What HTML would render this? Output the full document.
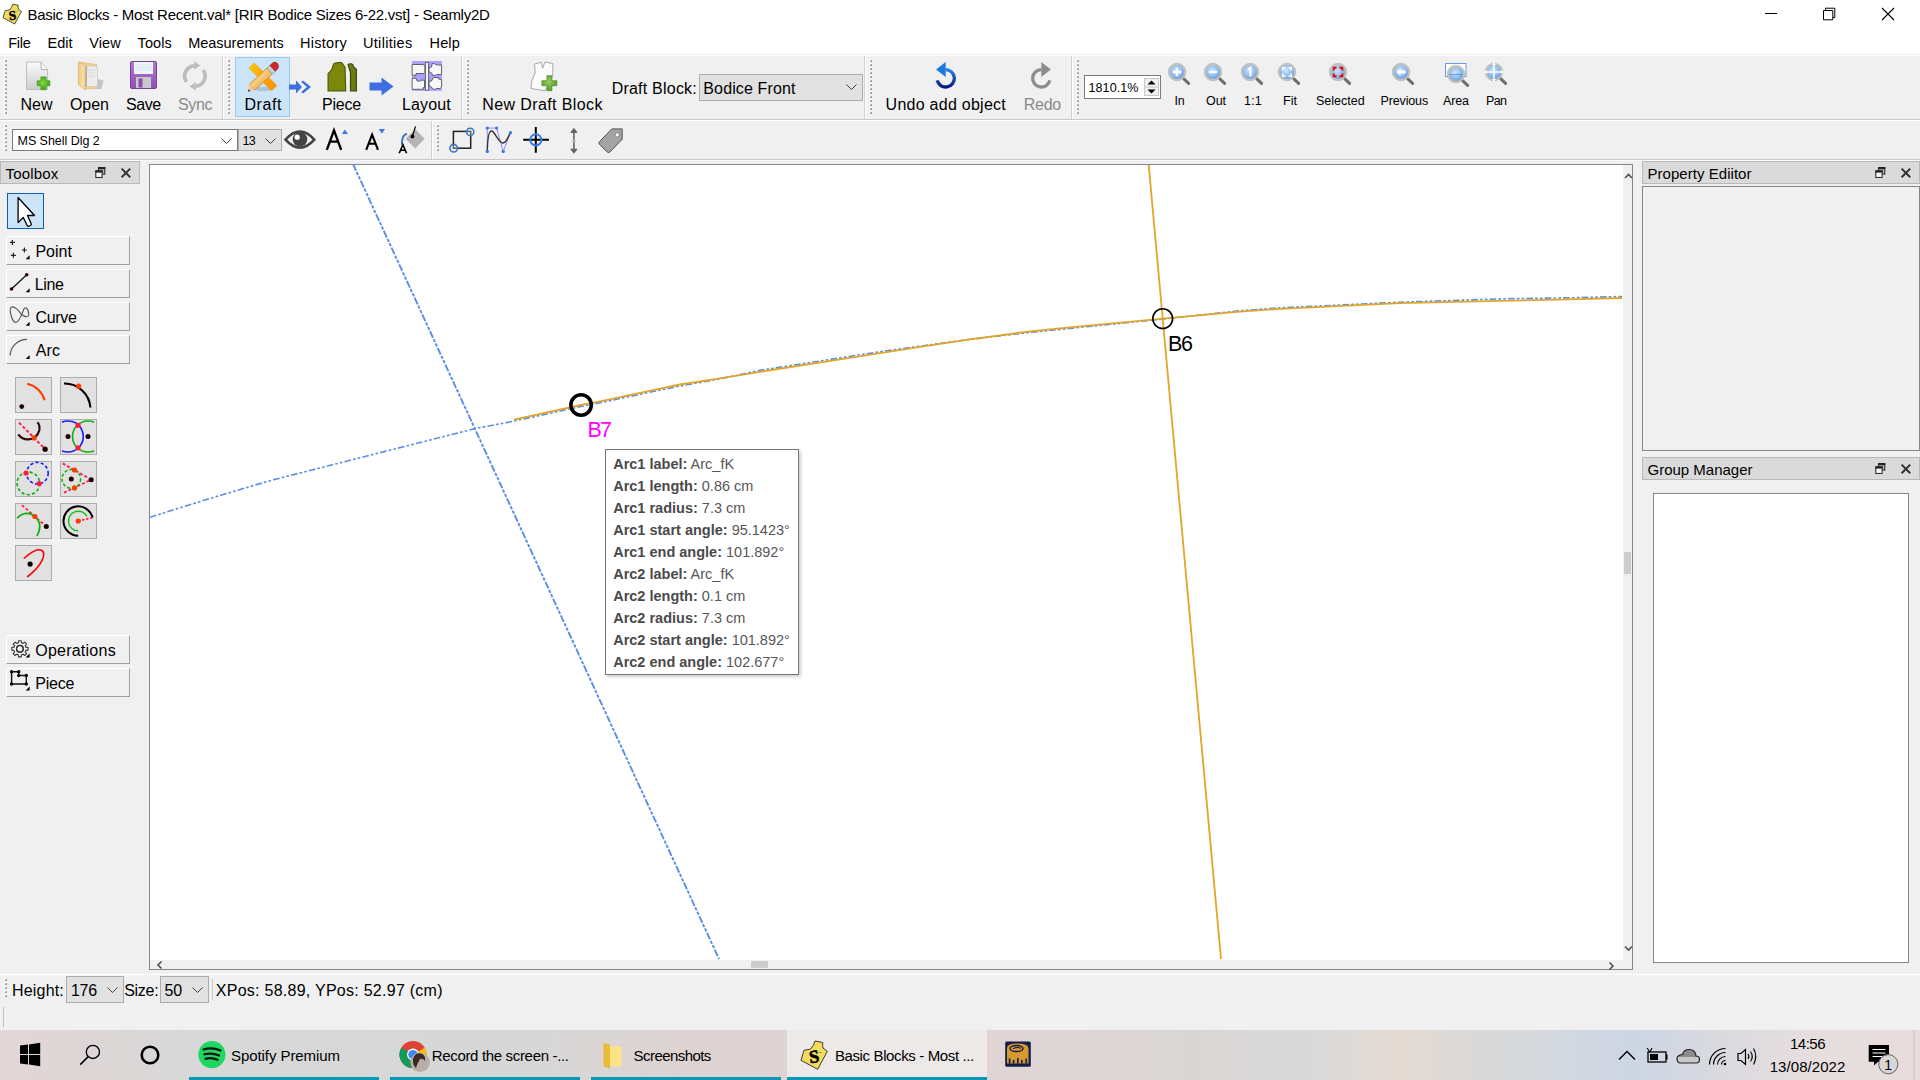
<!DOCTYPE html>
<html><head><meta charset="utf-8"><style>
html,body{margin:0;padding:0;}
body{width:1920px;height:1080px;position:relative;overflow:hidden;background:#f0f0f0;font-family:"Liberation Sans", sans-serif;}
body>div,body>svg{position:absolute;}
.t{white-space:pre;line-height:normal;}
</style></head><body>
<div style="left:0px;top:0px;width:1920px;height:54px;background:#fff"></div>
<div style="left:0px;top:54px;width:1920px;height:1px;background:#f0f0f0"></div>
<div style="left:0px;top:55px;width:1920px;height:1px;background:#fff"></div>
<div class="t" style="left:27.5px;top:6.12px;font-size:15px;color:#000;letter-spacing:-0.271px;">Basic Blocks - Most Recent.val* [RIR Bodice Sizes 6-22.vst] - Seamly2D</div>
<svg style="left:1755px;top:0px;" width="165" height="30" viewBox="0 0 165 30">
<path d="M10 13.5H22" stroke="#000" stroke-width="1"/>
<path d="M68.5 10.5h9.3v9.3h-9.3z M70.5 10.5v-2.3h9.3v9.3h-2" fill="none" stroke="#000" stroke-width="1"/>
<path d="M127 8L139 20M139 8L127 20" stroke="#000" stroke-width="1.1"/>
</svg>
<div class="t" style="left:8.25px;top:34.87px;font-size:14.5px;color:#000;letter-spacing:-0.281px;">File</div>
<div class="t" style="left:47.5px;top:34.87px;font-size:14.5px;color:#000;letter-spacing:0.000px;">Edit</div>
<div class="t" style="left:89.25px;top:34.87px;font-size:14.5px;color:#000;letter-spacing:0.082px;">View</div>
<div class="t" style="left:137.5px;top:34.87px;font-size:14.5px;color:#000;letter-spacing:0.128px;">Tools</div>
<div class="t" style="left:188.25px;top:34.87px;font-size:14.5px;color:#000;letter-spacing:-0.034px;">Measurements</div>
<div class="t" style="left:300px;top:34.87px;font-size:14.5px;color:#000;letter-spacing:0.268px;">History</div>
<div class="t" style="left:363px;top:34.87px;font-size:14.5px;color:#000;letter-spacing:0.307px;">Utilities</div>
<div class="t" style="left:429.5px;top:34.87px;font-size:14.5px;color:#000;letter-spacing:0.168px;">Help</div>
<div style="left:0px;top:119px;width:1920px;height:1px;background:#c8c8c8"></div>
<div style="left:0px;top:120px;width:1920px;height:1px;background:#fff"></div>
<svg style="left:4px;top:59px;" width="3" height="57" viewBox="0 0 3 57"><rect x="0" y="0" width="2" height="2" fill="#fcfcfc"/><rect x="1" y="1" width="2" height="2" fill="#a0a0a0"/><rect x="1" y="1" width="1" height="1" fill="#c8c8c8"/><rect x="0" y="4" width="2" height="2" fill="#fcfcfc"/><rect x="1" y="5" width="2" height="2" fill="#a0a0a0"/><rect x="1" y="5" width="1" height="1" fill="#c8c8c8"/><rect x="0" y="8" width="2" height="2" fill="#fcfcfc"/><rect x="1" y="9" width="2" height="2" fill="#a0a0a0"/><rect x="1" y="9" width="1" height="1" fill="#c8c8c8"/><rect x="0" y="12" width="2" height="2" fill="#fcfcfc"/><rect x="1" y="13" width="2" height="2" fill="#a0a0a0"/><rect x="1" y="13" width="1" height="1" fill="#c8c8c8"/><rect x="0" y="16" width="2" height="2" fill="#fcfcfc"/><rect x="1" y="17" width="2" height="2" fill="#a0a0a0"/><rect x="1" y="17" width="1" height="1" fill="#c8c8c8"/><rect x="0" y="20" width="2" height="2" fill="#fcfcfc"/><rect x="1" y="21" width="2" height="2" fill="#a0a0a0"/><rect x="1" y="21" width="1" height="1" fill="#c8c8c8"/><rect x="0" y="24" width="2" height="2" fill="#fcfcfc"/><rect x="1" y="25" width="2" height="2" fill="#a0a0a0"/><rect x="1" y="25" width="1" height="1" fill="#c8c8c8"/><rect x="0" y="28" width="2" height="2" fill="#fcfcfc"/><rect x="1" y="29" width="2" height="2" fill="#a0a0a0"/><rect x="1" y="29" width="1" height="1" fill="#c8c8c8"/><rect x="0" y="32" width="2" height="2" fill="#fcfcfc"/><rect x="1" y="33" width="2" height="2" fill="#a0a0a0"/><rect x="1" y="33" width="1" height="1" fill="#c8c8c8"/><rect x="0" y="36" width="2" height="2" fill="#fcfcfc"/><rect x="1" y="37" width="2" height="2" fill="#a0a0a0"/><rect x="1" y="37" width="1" height="1" fill="#c8c8c8"/><rect x="0" y="40" width="2" height="2" fill="#fcfcfc"/><rect x="1" y="41" width="2" height="2" fill="#a0a0a0"/><rect x="1" y="41" width="1" height="1" fill="#c8c8c8"/><rect x="0" y="44" width="2" height="2" fill="#fcfcfc"/><rect x="1" y="45" width="2" height="2" fill="#a0a0a0"/><rect x="1" y="45" width="1" height="1" fill="#c8c8c8"/><rect x="0" y="48" width="2" height="2" fill="#fcfcfc"/><rect x="1" y="49" width="2" height="2" fill="#a0a0a0"/><rect x="1" y="49" width="1" height="1" fill="#c8c8c8"/><rect x="0" y="52" width="2" height="2" fill="#fcfcfc"/><rect x="1" y="53" width="2" height="2" fill="#a0a0a0"/><rect x="1" y="53" width="1" height="1" fill="#c8c8c8"/></svg>
<div style="left:222px;top:56px;width:1px;height:63px;background:#d0d0d0"></div>
<div style="left:223px;top:56px;width:1px;height:63px;background:#fff"></div>
<svg style="left:227px;top:59px;" width="3" height="57" viewBox="0 0 3 57"><rect x="0" y="0" width="2" height="2" fill="#fcfcfc"/><rect x="1" y="1" width="2" height="2" fill="#a0a0a0"/><rect x="1" y="1" width="1" height="1" fill="#c8c8c8"/><rect x="0" y="4" width="2" height="2" fill="#fcfcfc"/><rect x="1" y="5" width="2" height="2" fill="#a0a0a0"/><rect x="1" y="5" width="1" height="1" fill="#c8c8c8"/><rect x="0" y="8" width="2" height="2" fill="#fcfcfc"/><rect x="1" y="9" width="2" height="2" fill="#a0a0a0"/><rect x="1" y="9" width="1" height="1" fill="#c8c8c8"/><rect x="0" y="12" width="2" height="2" fill="#fcfcfc"/><rect x="1" y="13" width="2" height="2" fill="#a0a0a0"/><rect x="1" y="13" width="1" height="1" fill="#c8c8c8"/><rect x="0" y="16" width="2" height="2" fill="#fcfcfc"/><rect x="1" y="17" width="2" height="2" fill="#a0a0a0"/><rect x="1" y="17" width="1" height="1" fill="#c8c8c8"/><rect x="0" y="20" width="2" height="2" fill="#fcfcfc"/><rect x="1" y="21" width="2" height="2" fill="#a0a0a0"/><rect x="1" y="21" width="1" height="1" fill="#c8c8c8"/><rect x="0" y="24" width="2" height="2" fill="#fcfcfc"/><rect x="1" y="25" width="2" height="2" fill="#a0a0a0"/><rect x="1" y="25" width="1" height="1" fill="#c8c8c8"/><rect x="0" y="28" width="2" height="2" fill="#fcfcfc"/><rect x="1" y="29" width="2" height="2" fill="#a0a0a0"/><rect x="1" y="29" width="1" height="1" fill="#c8c8c8"/><rect x="0" y="32" width="2" height="2" fill="#fcfcfc"/><rect x="1" y="33" width="2" height="2" fill="#a0a0a0"/><rect x="1" y="33" width="1" height="1" fill="#c8c8c8"/><rect x="0" y="36" width="2" height="2" fill="#fcfcfc"/><rect x="1" y="37" width="2" height="2" fill="#a0a0a0"/><rect x="1" y="37" width="1" height="1" fill="#c8c8c8"/><rect x="0" y="40" width="2" height="2" fill="#fcfcfc"/><rect x="1" y="41" width="2" height="2" fill="#a0a0a0"/><rect x="1" y="41" width="1" height="1" fill="#c8c8c8"/><rect x="0" y="44" width="2" height="2" fill="#fcfcfc"/><rect x="1" y="45" width="2" height="2" fill="#a0a0a0"/><rect x="1" y="45" width="1" height="1" fill="#c8c8c8"/><rect x="0" y="48" width="2" height="2" fill="#fcfcfc"/><rect x="1" y="49" width="2" height="2" fill="#a0a0a0"/><rect x="1" y="49" width="1" height="1" fill="#c8c8c8"/><rect x="0" y="52" width="2" height="2" fill="#fcfcfc"/><rect x="1" y="53" width="2" height="2" fill="#a0a0a0"/><rect x="1" y="53" width="1" height="1" fill="#c8c8c8"/></svg>
<div style="left:461px;top:56px;width:1px;height:63px;background:#d0d0d0"></div>
<div style="left:462px;top:56px;width:1px;height:63px;background:#fff"></div>
<svg style="left:466px;top:59px;" width="3" height="57" viewBox="0 0 3 57"><rect x="0" y="0" width="2" height="2" fill="#fcfcfc"/><rect x="1" y="1" width="2" height="2" fill="#a0a0a0"/><rect x="1" y="1" width="1" height="1" fill="#c8c8c8"/><rect x="0" y="4" width="2" height="2" fill="#fcfcfc"/><rect x="1" y="5" width="2" height="2" fill="#a0a0a0"/><rect x="1" y="5" width="1" height="1" fill="#c8c8c8"/><rect x="0" y="8" width="2" height="2" fill="#fcfcfc"/><rect x="1" y="9" width="2" height="2" fill="#a0a0a0"/><rect x="1" y="9" width="1" height="1" fill="#c8c8c8"/><rect x="0" y="12" width="2" height="2" fill="#fcfcfc"/><rect x="1" y="13" width="2" height="2" fill="#a0a0a0"/><rect x="1" y="13" width="1" height="1" fill="#c8c8c8"/><rect x="0" y="16" width="2" height="2" fill="#fcfcfc"/><rect x="1" y="17" width="2" height="2" fill="#a0a0a0"/><rect x="1" y="17" width="1" height="1" fill="#c8c8c8"/><rect x="0" y="20" width="2" height="2" fill="#fcfcfc"/><rect x="1" y="21" width="2" height="2" fill="#a0a0a0"/><rect x="1" y="21" width="1" height="1" fill="#c8c8c8"/><rect x="0" y="24" width="2" height="2" fill="#fcfcfc"/><rect x="1" y="25" width="2" height="2" fill="#a0a0a0"/><rect x="1" y="25" width="1" height="1" fill="#c8c8c8"/><rect x="0" y="28" width="2" height="2" fill="#fcfcfc"/><rect x="1" y="29" width="2" height="2" fill="#a0a0a0"/><rect x="1" y="29" width="1" height="1" fill="#c8c8c8"/><rect x="0" y="32" width="2" height="2" fill="#fcfcfc"/><rect x="1" y="33" width="2" height="2" fill="#a0a0a0"/><rect x="1" y="33" width="1" height="1" fill="#c8c8c8"/><rect x="0" y="36" width="2" height="2" fill="#fcfcfc"/><rect x="1" y="37" width="2" height="2" fill="#a0a0a0"/><rect x="1" y="37" width="1" height="1" fill="#c8c8c8"/><rect x="0" y="40" width="2" height="2" fill="#fcfcfc"/><rect x="1" y="41" width="2" height="2" fill="#a0a0a0"/><rect x="1" y="41" width="1" height="1" fill="#c8c8c8"/><rect x="0" y="44" width="2" height="2" fill="#fcfcfc"/><rect x="1" y="45" width="2" height="2" fill="#a0a0a0"/><rect x="1" y="45" width="1" height="1" fill="#c8c8c8"/><rect x="0" y="48" width="2" height="2" fill="#fcfcfc"/><rect x="1" y="49" width="2" height="2" fill="#a0a0a0"/><rect x="1" y="49" width="1" height="1" fill="#c8c8c8"/><rect x="0" y="52" width="2" height="2" fill="#fcfcfc"/><rect x="1" y="53" width="2" height="2" fill="#a0a0a0"/><rect x="1" y="53" width="1" height="1" fill="#c8c8c8"/></svg>
<div style="left:864px;top:56px;width:1px;height:63px;background:#d0d0d0"></div>
<div style="left:865px;top:56px;width:1px;height:63px;background:#fff"></div>
<svg style="left:869px;top:59px;" width="3" height="57" viewBox="0 0 3 57"><rect x="0" y="0" width="2" height="2" fill="#fcfcfc"/><rect x="1" y="1" width="2" height="2" fill="#a0a0a0"/><rect x="1" y="1" width="1" height="1" fill="#c8c8c8"/><rect x="0" y="4" width="2" height="2" fill="#fcfcfc"/><rect x="1" y="5" width="2" height="2" fill="#a0a0a0"/><rect x="1" y="5" width="1" height="1" fill="#c8c8c8"/><rect x="0" y="8" width="2" height="2" fill="#fcfcfc"/><rect x="1" y="9" width="2" height="2" fill="#a0a0a0"/><rect x="1" y="9" width="1" height="1" fill="#c8c8c8"/><rect x="0" y="12" width="2" height="2" fill="#fcfcfc"/><rect x="1" y="13" width="2" height="2" fill="#a0a0a0"/><rect x="1" y="13" width="1" height="1" fill="#c8c8c8"/><rect x="0" y="16" width="2" height="2" fill="#fcfcfc"/><rect x="1" y="17" width="2" height="2" fill="#a0a0a0"/><rect x="1" y="17" width="1" height="1" fill="#c8c8c8"/><rect x="0" y="20" width="2" height="2" fill="#fcfcfc"/><rect x="1" y="21" width="2" height="2" fill="#a0a0a0"/><rect x="1" y="21" width="1" height="1" fill="#c8c8c8"/><rect x="0" y="24" width="2" height="2" fill="#fcfcfc"/><rect x="1" y="25" width="2" height="2" fill="#a0a0a0"/><rect x="1" y="25" width="1" height="1" fill="#c8c8c8"/><rect x="0" y="28" width="2" height="2" fill="#fcfcfc"/><rect x="1" y="29" width="2" height="2" fill="#a0a0a0"/><rect x="1" y="29" width="1" height="1" fill="#c8c8c8"/><rect x="0" y="32" width="2" height="2" fill="#fcfcfc"/><rect x="1" y="33" width="2" height="2" fill="#a0a0a0"/><rect x="1" y="33" width="1" height="1" fill="#c8c8c8"/><rect x="0" y="36" width="2" height="2" fill="#fcfcfc"/><rect x="1" y="37" width="2" height="2" fill="#a0a0a0"/><rect x="1" y="37" width="1" height="1" fill="#c8c8c8"/><rect x="0" y="40" width="2" height="2" fill="#fcfcfc"/><rect x="1" y="41" width="2" height="2" fill="#a0a0a0"/><rect x="1" y="41" width="1" height="1" fill="#c8c8c8"/><rect x="0" y="44" width="2" height="2" fill="#fcfcfc"/><rect x="1" y="45" width="2" height="2" fill="#a0a0a0"/><rect x="1" y="45" width="1" height="1" fill="#c8c8c8"/><rect x="0" y="48" width="2" height="2" fill="#fcfcfc"/><rect x="1" y="49" width="2" height="2" fill="#a0a0a0"/><rect x="1" y="49" width="1" height="1" fill="#c8c8c8"/><rect x="0" y="52" width="2" height="2" fill="#fcfcfc"/><rect x="1" y="53" width="2" height="2" fill="#a0a0a0"/><rect x="1" y="53" width="1" height="1" fill="#c8c8c8"/></svg>
<div style="left:1071px;top:56px;width:1px;height:63px;background:#d0d0d0"></div>
<div style="left:1072px;top:56px;width:1px;height:63px;background:#fff"></div>
<svg style="left:1076px;top:59px;" width="3" height="57" viewBox="0 0 3 57"><rect x="0" y="0" width="2" height="2" fill="#fcfcfc"/><rect x="1" y="1" width="2" height="2" fill="#a0a0a0"/><rect x="1" y="1" width="1" height="1" fill="#c8c8c8"/><rect x="0" y="4" width="2" height="2" fill="#fcfcfc"/><rect x="1" y="5" width="2" height="2" fill="#a0a0a0"/><rect x="1" y="5" width="1" height="1" fill="#c8c8c8"/><rect x="0" y="8" width="2" height="2" fill="#fcfcfc"/><rect x="1" y="9" width="2" height="2" fill="#a0a0a0"/><rect x="1" y="9" width="1" height="1" fill="#c8c8c8"/><rect x="0" y="12" width="2" height="2" fill="#fcfcfc"/><rect x="1" y="13" width="2" height="2" fill="#a0a0a0"/><rect x="1" y="13" width="1" height="1" fill="#c8c8c8"/><rect x="0" y="16" width="2" height="2" fill="#fcfcfc"/><rect x="1" y="17" width="2" height="2" fill="#a0a0a0"/><rect x="1" y="17" width="1" height="1" fill="#c8c8c8"/><rect x="0" y="20" width="2" height="2" fill="#fcfcfc"/><rect x="1" y="21" width="2" height="2" fill="#a0a0a0"/><rect x="1" y="21" width="1" height="1" fill="#c8c8c8"/><rect x="0" y="24" width="2" height="2" fill="#fcfcfc"/><rect x="1" y="25" width="2" height="2" fill="#a0a0a0"/><rect x="1" y="25" width="1" height="1" fill="#c8c8c8"/><rect x="0" y="28" width="2" height="2" fill="#fcfcfc"/><rect x="1" y="29" width="2" height="2" fill="#a0a0a0"/><rect x="1" y="29" width="1" height="1" fill="#c8c8c8"/><rect x="0" y="32" width="2" height="2" fill="#fcfcfc"/><rect x="1" y="33" width="2" height="2" fill="#a0a0a0"/><rect x="1" y="33" width="1" height="1" fill="#c8c8c8"/><rect x="0" y="36" width="2" height="2" fill="#fcfcfc"/><rect x="1" y="37" width="2" height="2" fill="#a0a0a0"/><rect x="1" y="37" width="1" height="1" fill="#c8c8c8"/><rect x="0" y="40" width="2" height="2" fill="#fcfcfc"/><rect x="1" y="41" width="2" height="2" fill="#a0a0a0"/><rect x="1" y="41" width="1" height="1" fill="#c8c8c8"/><rect x="0" y="44" width="2" height="2" fill="#fcfcfc"/><rect x="1" y="45" width="2" height="2" fill="#a0a0a0"/><rect x="1" y="45" width="1" height="1" fill="#c8c8c8"/><rect x="0" y="48" width="2" height="2" fill="#fcfcfc"/><rect x="1" y="49" width="2" height="2" fill="#a0a0a0"/><rect x="1" y="49" width="1" height="1" fill="#c8c8c8"/><rect x="0" y="52" width="2" height="2" fill="#fcfcfc"/><rect x="1" y="53" width="2" height="2" fill="#a0a0a0"/><rect x="1" y="53" width="1" height="1" fill="#c8c8c8"/></svg>
<div style="left:235px;top:57px;width:55px;height:60px;background:#cce4f7;border:1px solid #99c9ef;box-sizing:border-box"></div>
<div class="t" style="left:20.6px;top:96.12px;font-size:16px;color:#000;letter-spacing:-0.039px;">New</div>
<div class="t" style="left:70px;top:96.12px;font-size:16px;color:#000;letter-spacing:-0.098px;">Open</div>
<div class="t" style="left:126px;top:96.12px;font-size:16px;color:#000;letter-spacing:-0.467px;">Save</div>
<div class="t" style="left:178px;top:96.12px;font-size:16px;color:#8a8a8a;letter-spacing:-0.395px;">Sync</div>
<div class="t" style="left:244.4px;top:96.12px;font-size:16px;color:#000;letter-spacing:0.586px;">Draft</div>
<div class="t" style="left:322px;top:96.12px;font-size:16px;color:#000;letter-spacing:-0.246px;">Piece</div>
<div class="t" style="left:402px;top:96.12px;font-size:16px;color:#000;letter-spacing:0.142px;">Layout</div>
<div class="t" style="left:482.3px;top:96.12px;font-size:16px;color:#000;letter-spacing:0.393px;">New Draft Block</div>
<div class="t" style="left:885.6px;top:96.12px;font-size:16px;color:#000;letter-spacing:0.258px;">Undo add object</div>
<div class="t" style="left:1023.7px;top:96.12px;font-size:16px;color:#8a8a8a;letter-spacing:-0.238px;">Redo</div>
<div class="t" style="left:611.7px;top:79.52px;font-size:16px;color:#000;letter-spacing:0.218px;">Draft Block:</div>
<div style="left:699px;top:74px;width:164px;height:27px;background:#e1e1e1;border:1px solid #adadad;box-sizing:border-box"></div>
<div class="t" style="left:703.3px;top:79.52px;font-size:16px;color:#000;letter-spacing:0.132px;">Bodice Front</div>
<svg style="left:846px;top:84px;" width="11" height="7" viewBox="0 0 11 7"><path d="M0.5 0.5L5.5 5.5L10.5 0.5" fill="none" stroke="#404040" stroke-width="1"/></svg>
<div style="left:1084px;top:75px;width:77px;height:24px;background:#fff;border:1px solid #7a7a7a;box-sizing:border-box"></div>
<div style="left:1144px;top:78px;width:15px;height:18px;background:#f0f0f0;border:1px solid #c8c8c8;box-sizing:border-box"></div>
<svg style="left:1144px;top:78px;" width="15" height="18" viewBox="0 0 15 18"><path d="M3.5 6.5L7.5 2.5L11.5 6.5z" fill="#000"/><path d="M3.5 11.5L7.5 15.5L11.5 11.5z" fill="#000"/><path d="M1 9H14" stroke="#c8c8c8"/></svg>
<div class="t" style="left:1088.5px;top:80.58px;font-size:12.5px;color:#000;letter-spacing:0.106px;">1810.1%</div>
<div class="t" style="left:1174.5px;top:94.28px;font-size:12.5px;color:#000;letter-spacing:-0.119px;">In</div>
<div class="t" style="left:1206px;top:94.28px;font-size:12.5px;color:#000;letter-spacing:-0.052px;">Out</div>
<div class="t" style="left:1244px;top:94.28px;font-size:12.5px;color:#000;letter-spacing:0.203px;">1:1</div>
<div class="t" style="left:1283px;top:94.28px;font-size:12.5px;color:#000;letter-spacing:0.036px;">Fit</div>
<div class="t" style="left:1316px;top:94.28px;font-size:12.5px;color:#000;letter-spacing:0.005px;">Selected</div>
<div class="t" style="left:1380.6px;top:94.28px;font-size:12.5px;color:#000;letter-spacing:-0.155px;">Previous</div>
<div class="t" style="left:1442.9px;top:94.28px;font-size:12.5px;color:#000;letter-spacing:-0.077px;">Area</div>
<div class="t" style="left:1486px;top:94.28px;font-size:12.5px;color:#000;letter-spacing:-0.583px;">Pan</div>
<div style="left:0px;top:159px;width:1920px;height:1px;background:#c8c8c8"></div>
<div style="left:0px;top:160px;width:1920px;height:1px;background:#fafafa"></div>
<svg style="left:4px;top:124px;" width="3" height="31" viewBox="0 0 3 31"><rect x="0" y="0" width="2" height="2" fill="#fcfcfc"/><rect x="1" y="1" width="2" height="2" fill="#a0a0a0"/><rect x="1" y="1" width="1" height="1" fill="#c8c8c8"/><rect x="0" y="4" width="2" height="2" fill="#fcfcfc"/><rect x="1" y="5" width="2" height="2" fill="#a0a0a0"/><rect x="1" y="5" width="1" height="1" fill="#c8c8c8"/><rect x="0" y="8" width="2" height="2" fill="#fcfcfc"/><rect x="1" y="9" width="2" height="2" fill="#a0a0a0"/><rect x="1" y="9" width="1" height="1" fill="#c8c8c8"/><rect x="0" y="12" width="2" height="2" fill="#fcfcfc"/><rect x="1" y="13" width="2" height="2" fill="#a0a0a0"/><rect x="1" y="13" width="1" height="1" fill="#c8c8c8"/><rect x="0" y="16" width="2" height="2" fill="#fcfcfc"/><rect x="1" y="17" width="2" height="2" fill="#a0a0a0"/><rect x="1" y="17" width="1" height="1" fill="#c8c8c8"/><rect x="0" y="20" width="2" height="2" fill="#fcfcfc"/><rect x="1" y="21" width="2" height="2" fill="#a0a0a0"/><rect x="1" y="21" width="1" height="1" fill="#c8c8c8"/><rect x="0" y="24" width="2" height="2" fill="#fcfcfc"/><rect x="1" y="25" width="2" height="2" fill="#a0a0a0"/><rect x="1" y="25" width="1" height="1" fill="#c8c8c8"/></svg>
<div style="left:12px;top:129px;width:226px;height:22px;background:#fff;border:1px solid #7a7a7a;box-sizing:border-box"></div>
<div class="t" style="left:17.5px;top:133.68px;font-size:12.5px;color:#000;letter-spacing:-0.035px;">MS Shell Dlg 2</div>
<svg style="left:221px;top:138px;" width="11" height="7" viewBox="0 0 11 7"><path d="M0.5 0.5L5.5 5.5L10.5 0.5" fill="none" stroke="#404040" stroke-width="1"/></svg>
<div style="left:238px;top:129px;width:44px;height:22px;background:#e1e1e1;border:1px solid #adadad;box-sizing:border-box"></div>
<div class="t" style="left:242.5px;top:133.68px;font-size:12.5px;color:#000;letter-spacing:-0.703px;">13</div>
<svg style="left:265px;top:138px;" width="11" height="7" viewBox="0 0 11 7"><path d="M0.5 0.5L5.5 5.5L10.5 0.5" fill="none" stroke="#404040" stroke-width="1"/></svg>
<div style="left:431px;top:121px;width:1px;height:38px;background:#d0d0d0"></div>
<div style="left:432px;top:121px;width:1px;height:38px;background:#fff"></div>
<svg style="left:436px;top:124px;" width="3" height="31" viewBox="0 0 3 31"><rect x="0" y="0" width="2" height="2" fill="#fcfcfc"/><rect x="1" y="1" width="2" height="2" fill="#a0a0a0"/><rect x="1" y="1" width="1" height="1" fill="#c8c8c8"/><rect x="0" y="4" width="2" height="2" fill="#fcfcfc"/><rect x="1" y="5" width="2" height="2" fill="#a0a0a0"/><rect x="1" y="5" width="1" height="1" fill="#c8c8c8"/><rect x="0" y="8" width="2" height="2" fill="#fcfcfc"/><rect x="1" y="9" width="2" height="2" fill="#a0a0a0"/><rect x="1" y="9" width="1" height="1" fill="#c8c8c8"/><rect x="0" y="12" width="2" height="2" fill="#fcfcfc"/><rect x="1" y="13" width="2" height="2" fill="#a0a0a0"/><rect x="1" y="13" width="1" height="1" fill="#c8c8c8"/><rect x="0" y="16" width="2" height="2" fill="#fcfcfc"/><rect x="1" y="17" width="2" height="2" fill="#a0a0a0"/><rect x="1" y="17" width="1" height="1" fill="#c8c8c8"/><rect x="0" y="20" width="2" height="2" fill="#fcfcfc"/><rect x="1" y="21" width="2" height="2" fill="#a0a0a0"/><rect x="1" y="21" width="1" height="1" fill="#c8c8c8"/><rect x="0" y="24" width="2" height="2" fill="#fcfcfc"/><rect x="1" y="25" width="2" height="2" fill="#a0a0a0"/><rect x="1" y="25" width="1" height="1" fill="#c8c8c8"/></svg>
<div style="left:0px;top:161px;width:140px;height:23px;background:#dadada;border:1px solid #b9b9b9;box-sizing:border-box"></div>
<div class="t" style="left:5.5px;top:164.92px;font-size:15px;color:#000;letter-spacing:0.185px;">Toolbox</div>
<svg style="left:95px;top:167px;" width="40" height="13" viewBox="0 0 40 13"><rect x="3.5" y="0.5" width="6.3" height="6.6" fill="#b4b4b4" stroke="#222" stroke-width="1"/><rect x="3" y="0" width="7.3" height="2.2" fill="#222"/>
<rect x="0.8" y="3.9" width="6.3" height="6.6" fill="#f6f6f6" stroke="#333" stroke-width="1.1"/><rect x="0.3" y="3.4" width="7.3" height="2.2" fill="#222"/>
<path d="M26.6 1.6L35.2 10.2M35.2 1.6L26.6 10.2" stroke="#333" stroke-width="2"/></svg>
<div style="left:1642px;top:161px;width:278px;height:23px;background:#dadada;border:1px solid #b9b9b9;box-sizing:border-box"></div>
<div class="t" style="left:1647.5px;top:164.92px;font-size:15px;color:#000;letter-spacing:0.039px;">Property Ediitor</div>
<svg style="left:1875px;top:167px;" width="40" height="13" viewBox="0 0 40 13"><rect x="3.5" y="0.5" width="6.3" height="6.6" fill="#b4b4b4" stroke="#222" stroke-width="1"/><rect x="3" y="0" width="7.3" height="2.2" fill="#222"/>
<rect x="0.8" y="3.9" width="6.3" height="6.6" fill="#f6f6f6" stroke="#333" stroke-width="1.1"/><rect x="0.3" y="3.4" width="7.3" height="2.2" fill="#222"/>
<path d="M26.6 1.6L35.2 10.2M35.2 1.6L26.6 10.2" stroke="#333" stroke-width="2"/></svg>
<div style="left:1642px;top:186px;width:278px;height:265px;border:1px solid #828790;box-sizing:border-box;background:#f0f0f0"></div>
<div style="left:1642px;top:457px;width:278px;height:23px;background:#dadada;border:1px solid #b9b9b9;box-sizing:border-box"></div>
<div class="t" style="left:1647.5px;top:460.92px;font-size:15px;color:#000;letter-spacing:-0.005px;">Group Manager</div>
<svg style="left:1875px;top:463px;" width="40" height="13" viewBox="0 0 40 13"><rect x="3.5" y="0.5" width="6.3" height="6.6" fill="#b4b4b4" stroke="#222" stroke-width="1"/><rect x="3" y="0" width="7.3" height="2.2" fill="#222"/>
<rect x="0.8" y="3.9" width="6.3" height="6.6" fill="#f6f6f6" stroke="#333" stroke-width="1.1"/><rect x="0.3" y="3.4" width="7.3" height="2.2" fill="#222"/>
<path d="M26.6 1.6L35.2 10.2M35.2 1.6L26.6 10.2" stroke="#333" stroke-width="2"/></svg>
<div style="left:1653px;top:493px;width:256px;height:470px;border:1px solid #828790;box-sizing:border-box;background:#fff"></div>
<div style="left:149px;top:164px;width:484px;height:806px;border:1px solid #828790;box-sizing:border-box;background:#fff;width:1484px"></div>
<div style="left:1623px;top:165px;width:9px;height:795px;background:#f0f0f0"></div>
<div style="left:150px;top:960px;width:1473px;height:9px;background:#f0f0f0"></div>
<div style="left:1623px;top:960px;width:9px;height:9px;background:#f0f0f0"></div>
<div style="left:1624px;top:552px;width:7px;height:22px;background:#cdcdcd"></div>
<div style="left:751px;top:961px;width:17px;height:7px;background:#cdcdcd"></div>
<svg style="left:1622px;top:171px;" width="12" height="10" viewBox="0 0 12 10"><path d="M3 7L6.5 3.5L10 7" fill="none" stroke="#505050" stroke-width="1.6"/></svg>
<svg style="left:1622px;top:943px;" width="12" height="10" viewBox="0 0 12 10"><path d="M3 3.5L6.5 7L10 3.5" fill="none" stroke="#505050" stroke-width="1.6"/></svg>
<svg style="left:154px;top:959px;" width="10" height="12" viewBox="0 0 10 12"><path d="M7.5 2.5L4 6L7.5 9.5" fill="none" stroke="#505050" stroke-width="1.6"/></svg>
<svg style="left:1606px;top:960px;" width="12" height="12" viewBox="0 0 12 12"><path d="M3.5 2.5L7 6L3.5 9.5" fill="none" stroke="#505050" stroke-width="1.6"/></svg>
<div style="left:0px;top:974px;width:1920px;height:1px;background:#fff"></div>
<svg style="left:4px;top:978px;" width="3" height="23" viewBox="0 0 3 23"><rect x="0" y="0" width="2" height="2" fill="#fcfcfc"/><rect x="1" y="1" width="2" height="2" fill="#a0a0a0"/><rect x="1" y="1" width="1" height="1" fill="#c8c8c8"/><rect x="0" y="4" width="2" height="2" fill="#fcfcfc"/><rect x="1" y="5" width="2" height="2" fill="#a0a0a0"/><rect x="1" y="5" width="1" height="1" fill="#c8c8c8"/><rect x="0" y="8" width="2" height="2" fill="#fcfcfc"/><rect x="1" y="9" width="2" height="2" fill="#a0a0a0"/><rect x="1" y="9" width="1" height="1" fill="#c8c8c8"/><rect x="0" y="12" width="2" height="2" fill="#fcfcfc"/><rect x="1" y="13" width="2" height="2" fill="#a0a0a0"/><rect x="1" y="13" width="1" height="1" fill="#c8c8c8"/><rect x="0" y="16" width="2" height="2" fill="#fcfcfc"/><rect x="1" y="17" width="2" height="2" fill="#a0a0a0"/><rect x="1" y="17" width="1" height="1" fill="#c8c8c8"/></svg>
<div class="t" style="left:12px;top:982.02px;font-size:16px;color:#000;letter-spacing:0.185px;">Height:</div>
<div style="left:66px;top:976px;width:58px;height:27px;background:#e1e1e1;border:1px solid #adadad;box-sizing:border-box"></div>
<div class="t" style="left:71px;top:982.02px;font-size:16px;color:#000;letter-spacing:-0.334px;">176</div>
<svg style="left:107px;top:987px;" width="11" height="7" viewBox="0 0 11 7"><path d="M0.5 0.5L5.5 5.5L10.5 0.5" fill="none" stroke="#404040" stroke-width="1"/></svg>
<div class="t" style="left:124.2px;top:982.02px;font-size:16px;color:#000;letter-spacing:-0.296px;">Size:</div>
<div style="left:160px;top:976px;width:49px;height:27px;background:#e1e1e1;border:1px solid #adadad;box-sizing:border-box"></div>
<div class="t" style="left:164.6px;top:982.02px;font-size:16px;color:#000;letter-spacing:-0.348px;">50</div>
<svg style="left:192px;top:987px;" width="11" height="7" viewBox="0 0 11 7"><path d="M0.5 0.5L5.5 5.5L10.5 0.5" fill="none" stroke="#404040" stroke-width="1"/></svg>
<div style="left:212px;top:979px;width:1px;height:21px;background:#c8c8c8"></div>
<div class="t" style="left:215.8px;top:982.02px;font-size:16px;color:#000;letter-spacing:0.263px;">XPos: 58.89, YPos: 52.97 (cm)</div>
<div style="left:3px;top:1007px;width:1px;height:20px;background:#c0c0c0"></div>
<div style="left:0px;top:1030px;width:1920px;height:50px;background:linear-gradient(90deg,#e3d6d6 0%,#ddd6d6 5%,#d8d8d8 10%,#d6d7d7 25%,#d9d6d6 30%,#ddd3d3 35%,#e0d5d5 52%,#dbd6d6 62%,#d9d9d9 68%,#e4dbd3 73%,#dcd9d6 76%,#d4d9e0 81%,#cdd6e4 85%,#d8d9e0 89%,#e6dede 94%,#e8dcdc 100%)"></div>
<div style="left:787px;top:1030px;width:200px;height:50px;background:#ede9e9"></div>
<div style="left:189px;top:1077px;width:190px;height:3px;background:#0b96b5"></div>
<div style="left:390px;top:1077px;width:190px;height:3px;background:#0b96b5"></div>
<div style="left:591px;top:1077px;width:190px;height:3px;background:#0b96b5"></div>
<div style="left:787px;top:1077px;width:200px;height:3px;background:#0b96b5"></div>
<div class="t" style="left:231px;top:1047.42px;font-size:15px;color:#000;letter-spacing:-0.070px;">Spotify Premium</div>
<div class="t" style="left:431.7px;top:1047.42px;font-size:15px;color:#000;letter-spacing:-0.329px;">Record the screen -...</div>
<div class="t" style="left:633.6px;top:1047.42px;font-size:15px;color:#000;letter-spacing:-0.563px;">Screenshots</div>
<div class="t" style="left:834.9px;top:1047.42px;font-size:15px;color:#000;letter-spacing:-0.372px;">Basic Blocks - Most ...</div>
<div class="t" style="left:1790px;top:1034.92px;font-size:15px;color:#000;letter-spacing:-0.509px;">14:56</div>
<div class="t" style="left:1769.7px;top:1058.12px;font-size:15px;color:#000;letter-spacing:0.062px;">13/08/2022</div>
<div style="left:7px;top:193px;width:37px;height:36px;background:#cce4f7;border:1px solid #0a5fb4;box-sizing:border-box"></div>
<div style="left:6px;top:236px;width:124px;height:29px;background:#f0f0f0;border-top:1px solid #fff;border-left:1px solid #fff;border-bottom:1px solid #a0a0a0;border-right:1px solid #a0a0a0;box-sizing:border-box"></div>
<div class="t" style="left:35.4px;top:242.52px;font-size:16px;color:#000;letter-spacing:0.026px;">Point</div>
<div style="left:6px;top:269px;width:124px;height:29px;background:#f0f0f0;border-top:1px solid #fff;border-left:1px solid #fff;border-bottom:1px solid #a0a0a0;border-right:1px solid #a0a0a0;box-sizing:border-box"></div>
<div class="t" style="left:34.8px;top:275.52px;font-size:16px;color:#000;letter-spacing:-0.362px;">Line</div>
<div style="left:6px;top:302px;width:124px;height:29px;background:#f0f0f0;border-top:1px solid #fff;border-left:1px solid #fff;border-bottom:1px solid #a0a0a0;border-right:1px solid #a0a0a0;box-sizing:border-box"></div>
<div class="t" style="left:35.4px;top:308.52px;font-size:16px;color:#000;letter-spacing:-0.297px;">Curve</div>
<div style="left:6px;top:335px;width:124px;height:29px;background:#f0f0f0;border-top:1px solid #fff;border-left:1px solid #fff;border-bottom:1px solid #a0a0a0;border-right:1px solid #a0a0a0;box-sizing:border-box"></div>
<div class="t" style="left:35.8px;top:341.52px;font-size:16px;color:#000;letter-spacing:0.100px;">Arc</div>
<div style="left:6px;top:635px;width:124px;height:29px;background:#f0f0f0;border-top:1px solid #fff;border-left:1px solid #fff;border-bottom:1px solid #a0a0a0;border-right:1px solid #a0a0a0;box-sizing:border-box"></div>
<div class="t" style="left:35.2px;top:641.52px;font-size:16px;color:#000;letter-spacing:0.243px;">Operations</div>
<div style="left:6px;top:668px;width:124px;height:29px;background:#f0f0f0;border-top:1px solid #fff;border-left:1px solid #fff;border-bottom:1px solid #a0a0a0;border-right:1px solid #a0a0a0;box-sizing:border-box"></div>
<div class="t" style="left:35.2px;top:674.52px;font-size:16px;color:#000;letter-spacing:-0.226px;">Piece</div>
<div style="left:15px;top:377px;width:37px;height:36px;background:#e1e1e1;border:1px solid #adadad;box-sizing:border-box"></div>
<div style="left:60px;top:377px;width:37px;height:36px;background:#e1e1e1;border:1px solid #adadad;box-sizing:border-box"></div>
<div style="left:15px;top:419px;width:37px;height:36px;background:#e1e1e1;border:1px solid #adadad;box-sizing:border-box"></div>
<div style="left:60px;top:419px;width:37px;height:36px;background:#e1e1e1;border:1px solid #adadad;box-sizing:border-box"></div>
<div style="left:15px;top:461px;width:37px;height:36px;background:#e1e1e1;border:1px solid #adadad;box-sizing:border-box"></div>
<div style="left:60px;top:461px;width:37px;height:36px;background:#e1e1e1;border:1px solid #adadad;box-sizing:border-box"></div>
<div style="left:15px;top:503px;width:37px;height:36px;background:#e1e1e1;border:1px solid #adadad;box-sizing:border-box"></div>
<div style="left:60px;top:503px;width:37px;height:36px;background:#e1e1e1;border:1px solid #adadad;box-sizing:border-box"></div>
<div style="left:15px;top:545px;width:37px;height:36px;background:#e1e1e1;border:1px solid #adadad;box-sizing:border-box"></div>
<div style="left:607px;top:451px;width:194px;height:226px;background:rgba(0,0,0,0.18);filter:blur(1.5px)"></div>
<div style="left:605px;top:449px;width:194px;height:226px;background:#fff;border:1px solid #767676;box-sizing:border-box"></div>
<div class="t" style="left:613.2px;top:455.62px;font-size:14.5px;color:#575757"><b style="color:#4a4a4a">Arc1 label:</b> Arc_fK</div>
<div class="t" style="left:613.2px;top:477.62px;font-size:14.5px;color:#575757"><b style="color:#4a4a4a">Arc1 length:</b> 0.86 cm</div>
<div class="t" style="left:613.2px;top:499.62px;font-size:14.5px;color:#575757"><b style="color:#4a4a4a">Arc1 radius:</b> 7.3 cm</div>
<div class="t" style="left:613.2px;top:521.62px;font-size:14.5px;color:#575757"><b style="color:#4a4a4a">Arc1 start angle:</b> 95.1423°</div>
<div class="t" style="left:613.2px;top:543.62px;font-size:14.5px;color:#575757"><b style="color:#4a4a4a">Arc1 end angle:</b> 101.892°</div>
<div class="t" style="left:613.2px;top:565.62px;font-size:14.5px;color:#575757"><b style="color:#4a4a4a">Arc2 label:</b> Arc_fK</div>
<div class="t" style="left:613.2px;top:587.62px;font-size:14.5px;color:#575757"><b style="color:#4a4a4a">Arc2 length:</b> 0.1 cm</div>
<div class="t" style="left:613.2px;top:609.62px;font-size:14.5px;color:#575757"><b style="color:#4a4a4a">Arc2 radius:</b> 7.3 cm</div>
<div class="t" style="left:613.2px;top:631.62px;font-size:14.5px;color:#575757"><b style="color:#4a4a4a">Arc2 start angle:</b> 101.892°</div>
<div class="t" style="left:613.2px;top:653.62px;font-size:14.5px;color:#575757"><b style="color:#4a4a4a">Arc2 end angle:</b> 102.677°</div>
<svg style="left:0;top:0" width="1920" height="1080" viewBox="0 0 1920 1080">
<defs><clipPath id="cv"><rect x="150" y="165" width="1473" height="795"/></clipPath></defs>
<g clip-path="url(#cv)">
<path d="M353,164 L719,959" stroke="#5a8de8" stroke-width="1.9" stroke-dasharray="7.3 1.5 3.3 1.5 3.3 1.5" fill="none"/>
<path d="M150,517.3 Q210,498 274,479.6 L474.4,428.75 L514,421.1 L581,406.5 L600,402.8 L640,394.3 L680,386.0 L720,378.9 L760,370.3 L840,357.9 L880,351.7 L930,344.8 L970,339.3 L1030,332.4 L1070,328.4 L1163,319.1 L1240,310.7 L1280,307.8 L1400,302.2 L1500,298.9 L1580,297.6 L1622,296.5" stroke="#5a8de6" stroke-width="1.6" stroke-dasharray="6.6 2.2 2.6 2.2 2.6 2.2" fill="none"/>
<path d="M1148.6,164 L1221,959" stroke="#e0a62a" stroke-width="1.8" fill="none"/>
<path d="M514,419.6 L581,405 L600,401.3 L640,392.8 L680,384.5 L720,378.4 L760,371.8 L840,359.4 L880,353.2 L930,345.3 L970,339.3 L1030,331.4 L1070,327.4 L1163,318.6 L1240,311.7 L1280,308.8 L1400,303.2 L1500,300.9 L1580,299.1 L1622,298" stroke="#e0a62a" stroke-width="1.8" fill="none" stroke-linejoin="round"/>
<circle cx="581.1" cy="405" r="10.2" stroke="#000" stroke-width="3.6" fill="none"/>
<circle cx="1162.7" cy="318.6" r="9.9" stroke="#000" stroke-width="1.6" fill="none"/>
</g></svg>
<div class="t" style="left:587.4px;top:417.54px;font-size:21.5px;color:#ff00ff;letter-spacing:-1.706px;">B7</div>
<div class="t" style="left:1168px;top:331.54px;font-size:21.5px;color:#000;letter-spacing:-1.306px;">B6</div>
<svg style="left:0px;top:0px;" width="30" height="30" viewBox="0 0 30 30"><path d="M3 17.7L5.1 10.7L9.5 9.9Q11.5 8 12.8 4.2L18.2 5.3Q18 8 18.4 9.1L21.4 11.4L14.7 24z" fill="#f0dc5c" stroke="#2a2a20" stroke-width="0.8" stroke-linejoin="round"/>
<text x="8.8" y="19.8" font-family="Liberation Serif" font-weight="bold" font-size="13" fill="#000" stroke="#000" stroke-width="0.5" transform="rotate(-8 12.6 15)">S</text>
<path d="M15 11.3h2.5" stroke="#a89a40" stroke-width="0.9"/></svg>
<svg style="left:22px;top:58px;" width="34" height="34" viewBox="0 0 34 34"><defs><linearGradient id="pg" x1="0" y1="0" x2="0" y2="1"><stop offset="0" stop-color="#fbfbfb"/><stop offset="1" stop-color="#cdcdcd"/></linearGradient>
<radialGradient id="gp" cx="0.45" cy="0.45" r="0.6"><stop offset="0" stop-color="#7ee03a"/><stop offset="1" stop-color="#3c9a18"/></radialGradient></defs>
<path d="M4.6 4.1h14.5l6.5 7.6v19.8h-21z" fill="url(#pg)" stroke="#bdbdbd" stroke-width="1"/>
<path d="M19.1 4.1v6.6q0 1 1 1h5.5" fill="#f4f4f4" stroke="#b0b0b0" stroke-width="1"/>
<path d="M18.9 18.9h5.2v3.9h3.8v5h-3.8v3.9h-5.2v-3.9h-3.7v-5h3.7z" fill="url(#gp)" stroke="#4a9a28" stroke-width="0.7"/></svg>
<svg style="left:72px;top:56px;" width="36" height="36" viewBox="0 0 36 36"><defs><linearGradient id="fo" x1="0" y1="0" x2="1" y2="0"><stop offset="0" stop-color="#f0cc86"/><stop offset="1" stop-color="#fde2a8"/></linearGradient></defs>
<path d="M25.5 23l6 1.5l-2 8.5l-5 0z" fill="#b8b8b8" opacity="0.8"/>
<path d="M7 6l17.5 2.5l0.7 24l-13 0.5z" fill="#f2d190" stroke="#d8b070" stroke-width="0.6"/>
<path d="M14 10h8l3.5 2v18.5h-11.5z" fill="#ececec" stroke="#c4c4c4" stroke-width="0.6"/>
<path d="M14.5 10.5l-0.5 20" stroke="#888" stroke-width="1.4" opacity="0.6"/>
<path d="M16 14h7M16 17h7M16 20h7" stroke="#cfcfcf" stroke-width="0.8"/>
<path d="M6.3 6l6.7 3v24.7l-6.5-5z" fill="url(#fo)" stroke="#d0a868" stroke-width="0.6"/></svg>
<svg style="left:126px;top:58px;" width="34" height="34" viewBox="0 0 34 34"><defs><linearGradient id="fl" x1="0" y1="0" x2="0" y2="1"><stop offset="0" stop-color="#b27ad4"/><stop offset="1" stop-color="#8d52b4"/></linearGradient></defs>
<rect x="4.5" y="3.5" width="26" height="27" rx="1.5" fill="url(#fl)" stroke="#7a3e9e" stroke-width="1"/>
<rect x="8" y="4" width="19" height="12" fill="#eef6fa"/>
<path d="M9 7h17M9 9.5h17M9 12h17" stroke="#d0dde6" stroke-width="0.7"/>
<rect x="10" y="19" width="15" height="11" fill="#c8c8c8"/>
<rect x="12.5" y="20.5" width="4" height="9" fill="#8a4eb0"/></svg>
<svg style="left:178px;top:58px;" width="34" height="34" viewBox="0 0 34 34"><path d="M8.5 23.85A10.2 10.2 0 0 1 16.5 7.8" fill="none" stroke="#bdbdbd" stroke-width="3.7"/>
<path d="M16.1 3.2L22.4 7.4L16.1 11.7z" fill="#bdbdbd"/>
<path d="M25.25 12.15A10.2 10.2 0 0 1 17.5 28.2" fill="none" stroke="#bdbdbd" stroke-width="3.7"/>
<path d="M17.8 24.1L11.5 28.4L17.8 32.6z" fill="#bdbdbd"/></svg>
<svg style="left:244px;top:58px;" width="36" height="36" viewBox="0 0 36 36"><defs><linearGradient id="rl" x1="0" y1="0" x2="1" y2="1"><stop offset="0" stop-color="#ffc800"/><stop offset="1" stop-color="#ff8c00"/></linearGradient>
<linearGradient id="pc" x1="0" y1="0" x2="1" y2="1"><stop offset="0" stop-color="#c86a10"/><stop offset="0.45" stop-color="#f8d080"/><stop offset="1" stop-color="#d87a18"/></linearGradient></defs>
<ellipse cx="19" cy="31" rx="9" ry="2.2" fill="#8aa0b8" opacity="0.5"/>
<path d="M5.2 10.2L10.2 5L32.8 27.6L27.4 32.8z" fill="url(#rl)" stroke="#e08a00" stroke-width="0.5"/>
<path d="M5.29 26.25L22.97 10.08L28.37 15.98L10.69 32.15z" fill="url(#pc)" stroke="#b86a10" stroke-width="0.5"/>
<path d="M22.97 10.08L25.92 7.35L31.32 13.25L28.37 15.98z" fill="#cfcfcf" stroke="#777" stroke-width="0.5"/>
<path d="M25.92 7.35L28.5 5Q31 3 33.5 5.5Q35.5 8 33.8 10.7L31.32 13.25z" fill="#c82828" stroke="#901818" stroke-width="0.5"/>
<path d="M5.29 26.25L10.69 32.15L4.3 33.6z" fill="#f0c898"/>
<path d="M4.6 31.2L6.4 33.1L4.1 33.8z" fill="#222"/></svg>
<svg style="left:289px;top:79px;" width="26" height="16" viewBox="0 0 26 16"><path d="M0 5.5h7v-4l6 6.5l-6 6.5v-4h-7z" fill="#3d6fe0"/>
<path d="M14 1.5l8 6.5l-8 6.5l-1.8-1.6L18 8L12.2 3.1z" fill="#3d6fe0"/></svg>
<svg style="left:369px;top:77px;" width="26" height="19" viewBox="0 0 26 19"><path d="M0.5 5.5h12v-5l12 9l-12 9v-5h-12z" fill="#3d6fe0"/></svg>
<svg style="left:325px;top:58px;" width="36" height="36" viewBox="0 0 36 36"><path d="M3.1 32.8V15.8Q5 14 7 11L8.1 7.3Q8.5 5.2 10 5.2L13.5 4.7Q15.5 3.9 17 5L20 9.1L20.7 32.8z" fill="#7d880a" stroke="#4e5a12" stroke-width="1.2"/>
<path d="M23 6.5Q24 5.5 26.5 5.8Q28.5 6.5 28.6 9L31.4 11.2V32.8H25.5V14.7z" fill="#6f7a10" stroke="#3e4a12" stroke-width="1.2"/></svg>
<svg style="left:410px;top:58px;" width="36" height="36" viewBox="0 0 36 36"><g transform="translate(-4,-2)">
<rect x="6.1" y="5" width="29.8" height="29.8" fill="#aaa0ff"/>
<g fill="#f6f8f8" stroke="#555" stroke-width="0.9" stroke-linejoin="round">
<path d="M6.1 8.5H17.4L18.9 10.5V16.5L18 17.5H10V19.3H6.1z"/>
<path d="M6.1 22.2H10L11.1 25H14.5L15.5 24.2H18.5V31.5H17.3V33.3H6.1z"/>
<rect x="19.4" y="6.3" width="3.2" height="28.1"/>
<path d="M23 11.5L25.5 11L26.3 7.4H28L29.5 8.5L31.5 9H35.6V18.5H30.5L29.5 19.3H26.5L26 17.5L23 15.5z"/>
<path d="M23 25.5L25.5 25L27.5 21.5H32.3L32.5 23L35.6 23.5V31L34 32.5H30L29.5 33.3H27.5L23 29z"/>
</g></g></svg>
<svg style="left:526px;top:58px;" width="36" height="36" viewBox="0 0 36 36"><path d="M8.5 6L15.2 4.4L16.6 10.2L19 4.1L26.8 5.5L26.8 17.7L19.3 32.8L5 30.5L5.8 22.4L9.2 15z" fill="#fbfbfb" stroke="#a8a8a8" stroke-width="1" stroke-linejoin="round"/>
<defs><radialGradient id="gp2" cx="0.45" cy="0.4" r="0.6"><stop offset="0" stop-color="#9ad05a"/><stop offset="1" stop-color="#5a9a30"/></radialGradient></defs>
<path d="M20.9 17.7h5v5h4.9v5h-4.9v5h-5v-5h-5v-5h5z" fill="url(#gp2)" stroke="#4a8a28" stroke-width="0.7"/></svg>
<svg style="left:930px;top:58px;" width="34" height="34" viewBox="0 0 34 34"><defs><linearGradient id="ub" x1="0" y1="0" x2="0" y2="1"><stop offset="0" stop-color="#2a80e8"/><stop offset="1" stop-color="#08188a"/></linearGradient></defs>
<path d="M15.7 11.6A8.7 8.7 0 1 1 7.2 22.3" fill="none" stroke="url(#ub)" stroke-width="3.3"/>
<path d="M6.1 11.5L15.7 3.9V18.9z" fill="#1a78e0"/></svg>
<svg style="left:1027px;top:58px;" width="34" height="34" viewBox="0 0 34 34"><path d="M14.3 11.6A8.7 8.7 0 1 0 22.8 22.3" fill="none" stroke="#8c8c8c" stroke-width="3.3"/>
<path d="M23.9 11.5L14.3 3.9V18.9z" fill="#8c8c8c"/></svg>
<svg style="left:1163.6px;top:58.8px;" width="30" height="30" viewBox="0 0 30 30"><defs><radialGradient id="mg1176" cx="0.45" cy="0.4" r="0.65"><stop offset="0" stop-color="#d4e6fb"/><stop offset="0.6" stop-color="#8ab8ee"/><stop offset="1" stop-color="#5a8ed8"/></radialGradient></defs>
<path d="M19.8 19.8L24.6 24.4" stroke="#6e6e6e" stroke-width="3" stroke-linecap="round"/>
<circle cx="13" cy="13" r="7.9" fill="url(#mg1176)" stroke="#c4c4bc" stroke-width="1.7"/>
<circle cx="13" cy="13" r="8.8" fill="none" stroke="#a8a8a0" stroke-width="0.5"/>
<path d="M13 8.8v8.4M8.8 13h8.4" stroke="#fff" stroke-width="2.3"/></svg>
<svg style="left:1200px;top:58.8px;" width="30" height="30" viewBox="0 0 30 30"><defs><radialGradient id="mg1213" cx="0.45" cy="0.4" r="0.65"><stop offset="0" stop-color="#d4e6fb"/><stop offset="0.6" stop-color="#8ab8ee"/><stop offset="1" stop-color="#5a8ed8"/></radialGradient></defs>
<path d="M19.8 19.8L24.6 24.4" stroke="#6e6e6e" stroke-width="3" stroke-linecap="round"/>
<circle cx="13" cy="13" r="7.9" fill="url(#mg1213)" stroke="#c4c4bc" stroke-width="1.7"/>
<circle cx="13" cy="13" r="8.8" fill="none" stroke="#a8a8a0" stroke-width="0.5"/>
<path d="M8.8 13h8.4" stroke="#fff" stroke-width="2.3"/></svg>
<svg style="left:1237.4px;top:58.8px;" width="30" height="30" viewBox="0 0 30 30"><defs><radialGradient id="mg1250" cx="0.45" cy="0.4" r="0.65"><stop offset="0" stop-color="#d4e6fb"/><stop offset="0.6" stop-color="#8ab8ee"/><stop offset="1" stop-color="#5a8ed8"/></radialGradient></defs>
<path d="M19.8 19.8L24.6 24.4" stroke="#6e6e6e" stroke-width="3" stroke-linecap="round"/>
<circle cx="13" cy="13" r="7.9" fill="url(#mg1250)" stroke="#c4c4bc" stroke-width="1.7"/>
<circle cx="13" cy="13" r="8.8" fill="none" stroke="#a8a8a0" stroke-width="0.5"/>
<path d="M11.3 10.2l2.2-1.6v9" stroke="#fff" stroke-width="1.9" fill="none"/></svg>
<svg style="left:1274px;top:58.8px;" width="30" height="30" viewBox="0 0 30 30"><defs><radialGradient id="mg1287" cx="0.45" cy="0.4" r="0.65"><stop offset="0" stop-color="#d4e6fb"/><stop offset="0.6" stop-color="#8ab8ee"/><stop offset="1" stop-color="#5a8ed8"/></radialGradient></defs>
<path d="M19.8 19.8L24.6 24.4" stroke="#6e6e6e" stroke-width="3" stroke-linecap="round"/>
<circle cx="13" cy="13" r="7.9" fill="url(#mg1287)" stroke="#c4c4bc" stroke-width="1.7"/>
<circle cx="13" cy="13" r="8.8" fill="none" stroke="#a8a8a0" stroke-width="0.5"/>
<path d="M8.7 11.5v-2.8h2.8M14.5 8.7h2.8v2.8M17.3 14.5v2.8h-2.8M11.5 17.3h-2.8v-2.8" stroke="#fff" stroke-width="1.5" fill="none"/></svg>
<svg style="left:1325.1px;top:58.8px;" width="30" height="30" viewBox="0 0 30 30"><defs><radialGradient id="mg1338" cx="0.45" cy="0.4" r="0.65"><stop offset="0" stop-color="#d4e6fb"/><stop offset="0.6" stop-color="#8ab8ee"/><stop offset="1" stop-color="#5a8ed8"/></radialGradient></defs>
<path d="M19.8 19.8L24.6 24.4" stroke="#6e6e6e" stroke-width="3" stroke-linecap="round"/>
<circle cx="13" cy="13" r="7.9" fill="url(#mg1338)" stroke="#c4c4bc" stroke-width="1.7"/>
<circle cx="13" cy="13" r="8.8" fill="none" stroke="#a8a8a0" stroke-width="0.5"/>
<path d="M8.7 11.5v-2.8h2.8M14.5 8.7h2.8v2.8M17.3 14.5v2.8h-2.8M11.5 17.3h-2.8v-2.8" stroke="#f00000" stroke-width="1.9" fill="none"/></svg>
<svg style="left:1387.9px;top:58.8px;" width="30" height="30" viewBox="0 0 30 30"><defs><radialGradient id="mg1400" cx="0.45" cy="0.4" r="0.65"><stop offset="0" stop-color="#d4e6fb"/><stop offset="0.6" stop-color="#8ab8ee"/><stop offset="1" stop-color="#5a8ed8"/></radialGradient></defs>
<path d="M19.8 19.8L24.6 24.4" stroke="#6e6e6e" stroke-width="3" stroke-linecap="round"/>
<circle cx="13" cy="13" r="7.9" fill="url(#mg1400)" stroke="#c4c4bc" stroke-width="1.7"/>
<circle cx="13" cy="13" r="8.8" fill="none" stroke="#a8a8a0" stroke-width="0.5"/>
<path d="M8.3 13l4.2-3.7v2.3h5v2.8h-5v2.3z" fill="#fff"/></svg>
<svg style="left:1444px;top:62px;" width="24" height="16" viewBox="0 0 24 16"><rect x="1.5" y="1.5" width="20.5" height="13" fill="#fff" stroke="#6a9ae0" stroke-width="1"/></svg>
<svg style="left:1442.7px;top:60.7px;" width="30" height="30" viewBox="0 0 30 30"><defs><radialGradient id="mg1455" cx="0.45" cy="0.4" r="0.65"><stop offset="0" stop-color="#d4e6fb"/><stop offset="0.6" stop-color="#8ab8ee"/><stop offset="1" stop-color="#5a8ed8"/></radialGradient></defs>
<path d="M19.8 19.8L24.6 24.4" stroke="#6e6e6e" stroke-width="3" stroke-linecap="round"/>
<circle cx="13" cy="13" r="7.9" fill="url(#mg1455)" stroke="#c4c4bc" stroke-width="1.7"/>
<circle cx="13" cy="13" r="8.8" fill="none" stroke="#a8a8a0" stroke-width="0.5"/>
<path d="M6 13.5h14" stroke="#5a8ed8" stroke-width="0.8"/></svg>
<svg style="left:1480.6px;top:58.8px;" width="30" height="30" viewBox="0 0 30 30"><defs><radialGradient id="mg1493" cx="0.45" cy="0.4" r="0.65"><stop offset="0" stop-color="#d4e6fb"/><stop offset="0.6" stop-color="#8ab8ee"/><stop offset="1" stop-color="#5a8ed8"/></radialGradient></defs>
<path d="M19.8 19.8L24.6 24.4" stroke="#6e6e6e" stroke-width="3" stroke-linecap="round"/>
<circle cx="13" cy="13" r="7.9" fill="url(#mg1493)" stroke="#c4c4bc" stroke-width="1.7"/>
<circle cx="13" cy="13" r="8.8" fill="none" stroke="#a8a8a0" stroke-width="0.5"/>
<path d="M13 4.5v17M4.5 13h17" stroke="#fff" stroke-width="1.4"/><path d="M13 3.5l-2 2.5h4zM13 22.5l-2-2.5h4zM3.5 13l2.5-2v4zM22.5 13l-2.5-2v4z" fill="#fff"/></svg>
<svg style="left:280px;top:122px;" width="160" height="36" viewBox="0 0 160 36">
<path d="M5.5 17.6Q19.9 1.5 34.3 17.6Q19.9 33.7 5.5 17.6z" fill="none" stroke="#444" stroke-width="2.6"/>
<circle cx="20" cy="17.3" r="7.3" fill="#444"/>
<circle cx="17.2" cy="15.2" r="2.6" fill="#fff"/>
<path d="M46.8 27.8L54 8.4L61.2 27.8M49.7 19.6H58.3" fill="none" stroke="#000" stroke-width="2.3" stroke-linejoin="miter"/>
<path d="M61.8 12.1L64.9 7.4L68 12.1z" fill="#3a7ae8"/>
<path d="M86.2 27.8L92.1 12.6L98 27.8M88.6 21.7H95.6" fill="none" stroke="#000" stroke-width="2.1" />
<path d="M98.8 7L105 7L101.9 11.7z" fill="#3a7ae8"/>
<path d="M125.2 7.2L134.8 16.8L125.2 26.4L115.6 16.8z" fill="#b4b4b4" transform="translate(10,0)"/>
<path d="M132.4 14.5L135.5 4.3" stroke="#000" stroke-width="1.2"/>
<circle cx="132.4" cy="14.5" r="1.9" fill="#000"/>
<path d="M122 22.7Q121.5 13 127 11.8" fill="none" stroke="#3a7ac0" stroke-width="2"/>
<path d="M119.2 31.3L122.9 22.7L126.6 31.3M120.4 28.3H125.4" fill="none" stroke="#000" stroke-width="1.6"/>
</svg>
<svg style="left:440px;top:122px;" width="200" height="36" viewBox="0 0 200 36">
<rect x="13.4" y="9.4" width="17.3" height="16.8" fill="none" stroke="#222" stroke-width="1.5"/>
<circle cx="30.2" cy="9.9" r="3.6" fill="#f0f0f0" fill-opacity="0.3" stroke="#3a7ac0" stroke-width="1.6"/>
<circle cx="13.7" cy="26.2" r="3.8" fill="#f0f0f0" fill-opacity="0.3" stroke="#3a7ac0" stroke-width="1.6"/>
<path d="M47.3 29.5L47.3 6.1L56.6 6.1L63.2 29.5L70.5 10.7" fill="none" stroke="#7a70f0" stroke-width="0.8"/>
<path d="M47.3 29.5C47.5 18 48.5 9 51.5 9C55 9 58 21 63.3 21C66 21 68 15 70.5 10.7" fill="none" stroke="#333" stroke-width="1.4"/>
<circle cx="47.3" cy="6.1" r="1.6" fill="#3a7ae8"/><circle cx="56.6" cy="6.1" r="1.6" fill="#3a7ae8"/><circle cx="70.5" cy="10.7" r="1.6" fill="#3a7ae8"/>
<circle cx="47.3" cy="29.5" r="1.7" fill="#3a7ae8"/><circle cx="63.2" cy="29.5" r="1.7" fill="#3a7ae8"/>
<path d="M83.2 17.8H108.9M95.8 5V30.7" stroke="#000" stroke-width="2"/>
<circle cx="95.8" cy="17.8" r="5.6" fill="none" stroke="#3a7ae8" stroke-width="2"/>
<path d="M133.9 8.5V29" stroke="#666" stroke-width="1.6"/>
<path d="M130.8 10.5L133.9 6.4L137 10.5z M130.8 27.2L133.9 31.2L137 27.2z" fill="#666" stroke="#666" stroke-width="1"/>
<circle cx="133.9" cy="18.8" r="1.6" fill="#aaa"/>
<path d="M159.4 19.8L171.8 6.9H182.2V17.3L169.8 30.2Q168.6 31.2 167.4 30.2L159.4 22.2Q158.4 21 159.4 19.8z" fill="#a4a4a4" stroke="#555" stroke-width="1"/>
<circle cx="177.2" cy="12.9" r="2.1" fill="#fff" stroke="#555" stroke-width="0.6"/>
</svg>
<svg style="left:0px;top:180px;" width="140" height="530" viewBox="0 0 140 530">
<path d="M18.1 17.5V42.5L23.3 37.5L27.3 45.8Q28 46.6 29 46.2L30.8 45.2Q31.6 44.6 31.2 43.7L27.5 35.5H34.5z" fill="#fff" stroke="#000" stroke-width="1.3" stroke-linejoin="round"/>
</svg>
<svg style="left:0px;top:230px;" width="40" height="470" viewBox="0 0 40 470">
<path d="M9.9 12.4h5M12.4 9.9v5 M21.9 20h5M24.4 17.5v5 M10.9 25.3h5M13.4 22.8v5" stroke="#222" stroke-width="1.2"/>
<path d="M25.6 29.3L29.6 25.3V29.3z" fill="#000"/>
<path d="M11.5 59L26.7 44.8" stroke="#111" stroke-width="1.3"/><circle cx="11.5" cy="59" r="1.8" fill="#300"/><circle cx="26.7" cy="44.8" r="1.8" fill="#300"/>
<path d="M25.6 62.3L29.6 58.3V62.3z" fill="#000"/>
<path d="M11 77.5C14 75 19 81 21 84C23 86 29 89 28.7 84C28.3 78 25 76 23.5 80C22 84 19 93 15.5 92.5C12 92 9 80 11 77.5z" fill="none" stroke="#555" stroke-width="1.1"/>
<path d="M25.6 95.7L29.6 91.7V95.7z" fill="#000"/>
<path d="M10.1 125.6A16.8 16.8 0 0 1 26.9 109.4" fill="none" stroke="#555" stroke-width="1.2"/>
<path d="M25.6 129L29.6 125V129z" fill="#000"/>
<g transform="translate(19.9,418.8)" fill="none" stroke="#333" stroke-width="1.2">
<path d="M-1.4 -7.9L1.4 -7.9L2 -5.4L3.9 -4.6L6.1 -6L8 -4.1L6.6 -1.9L7.4 0L9.9 0.6L9.9 3.4"  transform="scale(0.92)" stroke="none"/>
<circle r="3.3"/>
</g>
<path d="M7.6 41.8" />
<path d="M11.6 441.8H18.7V445.5H26.3V454H11.6z" fill="none" stroke="#111" stroke-width="1.4"/>
<circle cx="11.6" cy="441.8" r="1.7" fill="#000"/><circle cx="18.7" cy="441.8" r="1.7" fill="#000"/><circle cx="18.7" cy="445.5" r="1.7" fill="#000"/>
<circle cx="26.3" cy="445.5" r="1.7" fill="#000"/><circle cx="26.3" cy="454" r="1.7" fill="#000"/><circle cx="11.6" cy="454" r="1.7" fill="#000"/>
<path d="M25.6 427.5L29.6 423.5V427.5z" fill="#000"/><path d="M25.6 460.5L29.6 456.5V460.5z" fill="#000"/>
</svg>
<svg style="left:0px;top:0px;" width="40" height="700" viewBox="0 0 40 700"><polygon points="25.89,647.21 27.98,647.41 27.98,650.19 25.89,650.39 25.26,651.91 26.60,653.53 24.63,655.50 23.01,654.16 21.49,654.79 21.29,656.88 18.51,656.88 18.31,654.79 16.79,654.16 15.17,655.50 13.20,653.53 14.54,651.91 13.91,650.39 11.82,650.19 11.82,647.41 13.91,647.21 14.54,645.69 13.20,644.07 15.17,642.10 16.79,643.44 18.31,642.81 18.51,640.72 21.29,640.72 21.49,642.81 23.01,643.44 24.63,642.10 26.60,644.07 25.26,645.69" fill="none" stroke="#333" stroke-width="1.1" stroke-linejoin="round"/><circle cx="19.9" cy="648.8" r="3.4" fill="none" stroke="#333" stroke-width="1.2"/></svg>
<svg style="left:15.3px;top:377.3px;" width="36" height="36" viewBox="0 0 36 36"><path d="M12.2 6.75A23.5 23.5 0 0 1 29.6 23.2" fill="none" stroke="#ff3c00" stroke-width="2"/><circle cx="6.75" cy="29.6" r="2.4" fill="#180000"/></svg>
<svg style="left:60.2px;top:377.3px;" width="36" height="36" viewBox="0 0 36 36"><path d="M4 6.5A26 26 0 0 1 30.4 30.5" fill="none" stroke="#000" stroke-width="2.2"/><circle cx="18.6" cy="9.2" r="2.6" fill="#ff3c00"/></svg>
<svg style="left:15.3px;top:419.2px;" width="36" height="36" viewBox="0 0 36 36"><path d="M4.1 3.7L33 33" stroke="#ff1a50" stroke-width="2" stroke-dasharray="3 2.2"/><path d="M3.2 15.5Q8 21 13.4 20.4Q22 20 24.4 11Q25 6 22.4 3.3" fill="none" stroke="#300808" stroke-width="2.2"/><circle cx="19.1" cy="18.9" r="2.6" fill="#ff3c00"/><circle cx="30.1" cy="30.2" r="2.6" fill="#180000"/></svg>
<svg style="left:60.2px;top:419.2px;" width="36" height="36" viewBox="0 0 36 36"><defs><clipPath id="gc4"><rect x="2" y="1" width="32" height="33"/></clipPath></defs><g clip-path="url(#gc4)"><circle cx="7.8" cy="17.5" r="15.5" fill="none" stroke="#1a1aff" stroke-width="1.6" stroke-dasharray="30 0" transform=""/><circle cx="28" cy="17.5" r="15.5" fill="none" stroke="#10b010" stroke-width="1.6"/></g><circle cx="18" cy="6.3" r="2.6" fill="#ff1a40"/><circle cx="18" cy="28.8" r="2.6" fill="#ff1a40"/><circle cx="8" cy="17.5" r="2.5" fill="#180000"/><circle cx="28" cy="17.5" r="2.5" fill="#180000"/></svg>
<svg style="left:15.3px;top:461.3px;" width="36" height="36" viewBox="0 0 36 36"><circle cx="22.4" cy="12.2" r="10.8" fill="none" stroke="#1a1aff" stroke-width="1.6" stroke-dasharray="3.2 2.2"/><circle cx="13.4" cy="22.4" r="11.3" fill="none" stroke="#10b010" stroke-width="1.6" stroke-dasharray="3.2 2.2"/><circle cx="11" cy="12" r="2.6" fill="#ff1a40"/><circle cx="24.2" cy="22.5" r="2.6" fill="#ff1a40"/></svg>
<svg style="left:60.2px;top:461.3px;" width="36" height="36" viewBox="0 0 36 36"><path d="M2.7 2.4L31.2 18.7L2.7 32.2" fill="none" stroke="#ff1a50" stroke-width="1.8" stroke-dasharray="3 2"/><circle cx="11.3" cy="17.9" r="9.3" fill="none" stroke="#10b010" stroke-width="1.5" stroke-dasharray="3.2 2"/><circle cx="11.3" cy="17.9" r="2.5" fill="#180000"/><circle cx="31.2" cy="18.7" r="2.5" fill="#180000"/><circle cx="14.5" cy="9" r="2.6" fill="#ff3c00"/><circle cx="14.5" cy="26.9" r="2.6" fill="#ff3c00"/></svg>
<svg style="left:15.3px;top:503.2px;" width="36" height="36" viewBox="0 0 36 36"><path d="M6.9 2.1L31.3 23.6" stroke="#ff1a50" stroke-width="1.8" stroke-dasharray="3 2"/><path d="M2 15.1Q12 6 21 14.5Q28 22 22 33" fill="none" stroke="#10b010" stroke-width="1.8"/><circle cx="19.9" cy="13.5" r="2.6" fill="#ff3c00"/><circle cx="31.3" cy="23.6" r="2.5" fill="#180000"/></svg>
<svg style="left:60.2px;top:503.2px;" width="36" height="36" viewBox="0 0 36 36"><path d="M32.5 14.7A14.7 14.7 0 1 0 18.2 32.7" fill="none" stroke="#000" stroke-width="2"/><path d="M27 13.5A9.8 9.8 0 1 0 18.2 27.8" fill="none" stroke="#10c010" stroke-width="1.4"/><path d="M18.2 18L32.5 14.7" stroke="#ff1a50" stroke-width="1.6" stroke-dasharray="2.5 1.5"/><circle cx="18.2" cy="18" r="2.6" fill="#ff3c00"/></svg>
<svg style="left:15.3px;top:545.25px;" width="36" height="36" viewBox="0 0 36 36"><path d="M8.8 13.5C16 7 23 3 27 5.5C31 8.5 28 20 12.1 32" fill="none" stroke="#ff0000" stroke-width="1.6"/><circle cx="15.1" cy="19.1" r="2.6" fill="#000"/></svg>
<svg style="left:0px;top:1030px;" width="240" height="50" viewBox="0 0 240 50">
<path d="M20 15.6L28 14.5V24H20z M29 14.4L40.2 12.8V24H29z M20 25H28V34.5L20 33.4z M29 25H40.2V36.2L29 34.6z" fill="#000"/>
<circle cx="92.9" cy="21.9" r="6.6" fill="none" stroke="#000" stroke-width="1.3"/>
<path d="M88.2 26.6L80.2 34.6" stroke="#000" stroke-width="1.5"/>
<circle cx="150" cy="25" r="8.3" fill="none" stroke="#000" stroke-width="2.6"/>
<circle cx="211.9" cy="24.6" r="13.6" fill="#1ed760"/>
<path d="M203.5 19.5Q212 16.8 220.5 20.5M204.5 24.3Q212 22.3 219 25.5M205.5 28.8Q211.5 27.2 217.5 29.8" fill="none" stroke="#111" stroke-width="2.2" stroke-linecap="round"/>
</svg>
<svg style="left:390px;top:1030px;" width="660" height="50" viewBox="0 0 660 50">
<circle cx="23" cy="24.6" r="13.5" fill="#db4437"/>
<path d="M23 24.6 L11.3 31.35 A13.5 13.5 0 0 1 11.3 17.85 z" fill="#0f9d58"/>
<path d="M23 24.6 L34.7 31.35 A13.5 13.5 0 0 1 11.3 31.35 z" fill="#0f9d58"/>
<path d="M23 24.6 L34.7 17.85 A13.5 13.5 0 0 1 34.7 31.35 z" fill="#f4c20d"/>
<circle cx="23" cy="24.6" r="6" fill="#fff"/><circle cx="23" cy="24.6" r="4.7" fill="#4285f4"/>
<circle cx="30.1" cy="32.4" r="9.7" fill="#b8aea8"/><path d="M23 29Q25 22.5 31 23.5Q36 25 35 31Q33 28 30 29Q27 34 26 38Q22 34 23 29z" fill="#3a2a22"/>
<path d="M213.6 13L220 14.5V38.5L213.6 36.5z" fill="#f5d060"/>
<path d="M216 16.5h15.6v20h-15.6z" fill="#fce38a"/>
<path d="M213.6 13L220 14.5V38.5L213.6 36.5z" fill="#e8b830" opacity="0.9"/>
<path d="M411 30.3L414 20.3L420.3 19.2Q424 16 425 11L432.7 12.5Q432.5 16 433 18L437.3 21.3L427.7 39.3z" fill="#f2dc60" stroke="#2a2a20" stroke-width="0.9" stroke-linejoin="round"/>
<text x="419" y="32.6" font-family="Liberation Serif" font-weight="bold" font-size="18" fill="#000" stroke="#000" stroke-width="0.6" transform="rotate(-8 424.7 26.3)">S</text>
<path d="M428.5 22.5h3.5" stroke="#a89a40" stroke-width="1"/>
<rect x="615.2" y="11.5" width="25.6" height="25.2" rx="1.5" fill="#141c48"/>
<path d="M617 18Q617 13.5 627 13.5Q638.5 13.5 638.5 18.5V33.5H617z" fill="#d49a30"/>
<path d="M618.8 33.5V28.5H620.4V33.5M622.8 33.5V30H624.4V33.5M627 33.5V28H628.6V33.5M631 33.5V30H632.6V33.5M635.4 33.5V28.5H637V33.5" fill="#141c48"/>
<ellipse cx="626.5" cy="18.5" rx="6.5" ry="3" fill="none" stroke="#141c48" stroke-width="1.4"/>
<path d="M623 18.8Q627 16.5 631 18.3" fill="none" stroke="#141c48" stroke-width="1.2"/>
</svg>
<svg style="left:1600px;top:1030px;" width="320" height="50" viewBox="0 0 320 50">
<path d="M19 29.5L27 21.5L35 29.5" fill="none" stroke="#000" stroke-width="1.4"/>
<rect x="48" y="22" width="18" height="10" fill="none" stroke="#000" stroke-width="1.3"/>
<rect x="66" y="24.5" width="1.5" height="5" fill="#000"/>
<rect x="50" y="24" width="8" height="6" fill="#000"/>
<path d="M47 18l3 4M52 18l-2 4" stroke="#000" stroke-width="1.1"/>
<defs><linearGradient id="cl" x1="0" y1="0" x2="0" y2="1"><stop offset="0" stop-color="#8c8c8c"/><stop offset="0.55" stop-color="#8c8c8c"/><stop offset="0.56" stop-color="#c8c8c8"/><stop offset="1" stop-color="#c8c8c8"/></linearGradient></defs><path d="M80 33H96Q99.5 33 99.5 29.5Q99.5 26 96 26Q95.5 19.5 89 19.5Q84 19.5 82.5 24.5Q77 25 77 29Q77.5 33 80 33z" fill="url(#cl)" stroke="#222" stroke-width="1.2"/>
<path d="M109.5 34.5A16 16 0 0 1 125.5 18.5M113.5 34.5A12 12 0 0 1 125.5 22.5M117.5 34.5A8 8 0 0 1 125.5 26.5M121.5 34.5A4 4 0 0 1 125.5 30.5" fill="none" stroke="#000" stroke-width="1.2"/>
<circle cx="125" cy="34" r="1.3" fill="#000"/>
<path d="M138 23.5h3l4.5-4v15l-4.5-4h-3z" fill="none" stroke="#000" stroke-width="1.2"/>
<path d="M148 24Q150 26.5 148 29M150.5 21.5Q154 26.5 150.5 31.5M153.5 18.5Q158 26.5 153.5 34.5" fill="none" stroke="#000" stroke-width="1.1"/>
<path d="M268.7 15H289V31.7H278L274 35.5V31.7H268.7z" fill="#000"/>
<path d="M272.5 19.5h13M272.5 23h13M272.5 26.5h13" stroke="#fff" stroke-width="1.2"/>
<circle cx="288.3" cy="34.2" r="9.6" fill="#d8d6d6" stroke="#666" stroke-width="1"/><rect x="313.5" y="0" width="1" height="50" fill="#c8c0c0"/>
<text x="284.2" y="39.6" font-family="Liberation Sans" font-size="14" fill="#000">1</text>
</svg>
</body></html>
